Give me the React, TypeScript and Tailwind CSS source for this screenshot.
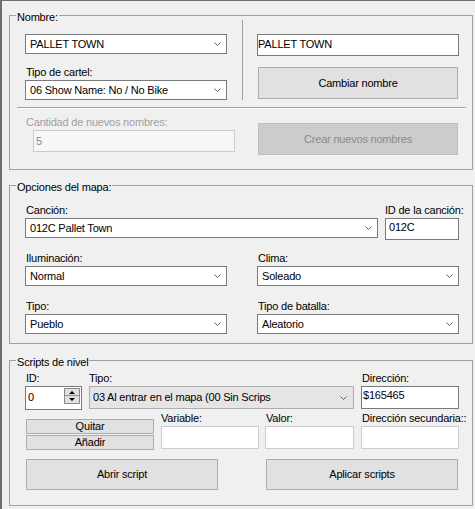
import type { ReactNode } from "react";

// WinForms-style map header editor panel.

function Chevron() {
  return (
    <svg width="7" height="4" viewBox="0 0 7 4" className="shrink-0">
      <path d="M0.5 0.5 L3.5 3.5 L6.5 0.5" stroke="#5f5f5f" strokeWidth="1" fill="none" />
    </svg>
  );
}

function Combo({ value, className = "" }: { value: string; className?: string }) {
  return (
    <div
      className={`flex items-center justify-between h-[20px] border border-[#7a7a7a] bg-white pl-[4px] pr-[5px] ${className}`}
    >
      <span className="whitespace-nowrap">{value}</span>
      <Chevron />
    </div>
  );
}

function FlatCombo({ value, className = "" }: { value: string; className?: string }) {
  return (
    <div
      className={`flex items-center justify-between h-[23px] border border-[#adadad] bg-[#e5e5e5] pl-[3px] pr-[6px] ${className}`}
    >
      <span className="whitespace-nowrap overflow-hidden">{value}</span>
      <Chevron />
    </div>
  );
}

function TextBox({
  value = "",
  className = "",
  light = false,
  disabled = false,
}: {
  value?: string;
  className?: string;
  light?: boolean;
  disabled?: boolean;
}) {
  return (
    <div
      className={`border whitespace-nowrap ${
        light ? "border-[#cccccc]" : "border-[#7a7a7a]"
      } ${disabled ? "bg-[#f7f7f7] text-[#8a8a8a]" : "bg-white"} ${className}`}
    >
      {value}
    </div>
  );
}

function Btn({
  children,
  className = "",
  disabled = false,
}: {
  children: ReactNode;
  className?: string;
  disabled?: boolean;
}) {
  return (
    <div
      className={`flex items-center justify-center border ${
        disabled
          ? "bg-[#cccccc] border-[#bfbfbf] text-[#8b8b8b]"
          : "bg-[#e1e1e1] border-[#adadad]"
      } ${className}`}
    >
      {children}
    </div>
  );
}

function Group({
  title,
  className,
  children,
}: {
  title: string;
  className: string;
  children: ReactNode;
}) {
  return (
    <div className={`relative ml-[7px] w-[464px] border border-[#a0a0a0] ${className}`}>
      <span className="absolute left-[6px] -top-[5px] px-[1px] bg-[#f0f0f0] whitespace-nowrap">
        {title}
      </span>
      {children}
    </div>
  );
}

function Spinner() {
  return (
    <div className="flex flex-col mt-[1px] mr-[1px] gap-0">
      <div className="w-[16px] h-[8px] bg-[#e1e1e1] border border-[#8a8a8a] flex items-center justify-center">
        <div className="w-0 h-0 border-l-[3px] border-r-[3px] border-b-[3px] border-l-transparent border-r-transparent border-b-black" />
      </div>
      <div className="w-[16px] h-[8px] bg-[#e1e1e1] border border-[#8a8a8a] border-t-0 flex items-center justify-center">
        <div className="w-0 h-0 border-l-[3px] border-r-[3px] border-t-[3px] border-l-transparent border-r-transparent border-t-black" />
      </div>
    </div>
  );
}

export default function App() {
  return (
    <div className="w-[475px] h-[509px] overflow-hidden bg-[#f0f0f0] border-t border-l-2 border-[#6e6e6e] text-black font-['Liberation_Sans',Arial,sans-serif] text-[11px] leading-[13px] tracking-[-0.2px]">
      <Group title="Nombre:" className="mt-[14px] h-[155px]">
        <div className="flex items-start">
          <div className="ml-[15px] mt-[18px] w-[202px] flex flex-col">
            <Combo value="PALLET TOWN" />
            <span className="mt-[12px] pl-[1px]">Tipo de cartel:</span>
            <Combo value="06 Show Name: No / No Bike" className="mt-[1px]" />
          </div>
          <div className="ml-[15px] mt-[4px] w-px h-[80px] bg-[#a0a0a0]" />
          <div className="ml-[14px] mt-[18px] w-[202px] flex flex-col">
            <TextBox value="PALLET TOWN" className="h-[22px] pt-[3px] pl-0" />
            <Btn className="ml-[1px] mt-[11px] w-[200px] h-[32px]">Cambiar nombre</Btn>
          </div>
        </div>
        <div className="ml-[7px] mt-[7px] w-[449px] h-[2px] border-t border-t-[#a0a0a0] border-b border-b-white" />
        <div className="flex items-start">
          <div className="ml-[16px] mt-[7px] w-[209px] flex flex-col">
            <span className="text-[#a0a0a0] whitespace-nowrap">Cantidad de nuevos nombres:</span>
            <TextBox value="5" light disabled className="ml-[7px] mt-[1px] w-[202px] h-[22px] pt-[4px] pl-[2px]" />
          </div>
          <Btn disabled className="ml-[23px] mt-[14px] w-[200px] h-[32px]">
            Crear nuevos nombres
          </Btn>
        </div>
      </Group>

      <Group title="Opciones del mapa:" className="mt-[15px] h-[159px]">
        <div className="ml-[15px] mt-[18px] flex flex-col">
          <div className="flex h-[34px]">
            <div className="w-[353px] flex flex-col">
              <span className="pl-[1px]">Canción:</span>
              <Combo value="012C Pallet Town" className="mt-[1px]" />
            </div>
            <div className="ml-[7px] w-[74px] flex flex-col">
              <span className="text-right pr-[1px] whitespace-nowrap">ID de la canción:</span>
              <TextBox value="012C" className="mt-[1px] h-[22px] pt-[2px] pl-[3px] shrink-0" />
            </div>
          </div>
          <div className="flex h-[34px] mt-[14px]">
            <div className="w-[202px] flex flex-col">
              <span className="pl-[1px]">Iluminación:</span>
              <Combo value="Normal" className="mt-[1px]" />
            </div>
            <div className="ml-[30px] w-[202px] flex flex-col">
              <span className="pl-[1px]">Clima:</span>
              <Combo value="Soleado" className="mt-[1px]" />
            </div>
          </div>
          <div className="flex h-[34px] mt-[14px]">
            <div className="w-[202px] flex flex-col">
              <span className="pl-[1px]">Tipo:</span>
              <Combo value="Pueblo" className="mt-[1px]" />
            </div>
            <div className="ml-[30px] w-[202px] flex flex-col">
              <span className="pl-[1px]">Tipo de batalla:</span>
              <Combo value="Aleatorio" className="mt-[1px]" />
            </div>
          </div>
        </div>
      </Group>

      <Group title="Scripts de nivel" className="mt-[16px] h-[146px]">
        <div className="ml-[15px] mt-[11px] flex items-start">
          <div className="w-[57px] flex flex-col">
            <span className="pl-[1px]">ID:</span>
            <div className="mt-[1px] h-[24px] border border-[#7a7a7a] bg-white flex items-start justify-between">
              <span className="pl-[2px] pt-[4px]">0</span>
              <Spinner />
            </div>
          </div>
          <div className="ml-[7px] w-[265px] flex flex-col">
            <span>Tipo:</span>
            <FlatCombo value="03 Al entrar en el mapa (00 Sin Scrips" className="mt-[1px]" />
          </div>
          <div className="ml-[7px] w-[98px] flex flex-col">
            <span className="pl-[1px]">Dirección:</span>
            <TextBox value="$165465" className="mt-[1px] h-[23px] pt-[2px] pl-[1px]" />
          </div>
        </div>
        <div className="ml-[16px] mt-[2px] flex items-start">
          <div className="w-[128px] pt-[7px] flex flex-col">
            <Btn className="h-[15px]">Quitar</Btn>
            <Btn className="mt-[1px] h-[15px]">Añadir</Btn>
          </div>
          <div className="ml-[7px] w-[98px] flex flex-col">
            <span>Variable:</span>
            <TextBox light className="mt-[1px] h-[23px]" />
          </div>
          <div className="ml-[6px] w-[89px] flex flex-col">
            <span className="pl-[1px]">Valor:</span>
            <TextBox light className="mt-[1px] h-[23px]" />
          </div>
          <div className="ml-[7px] w-[98px] flex flex-col">
            <span className="pl-[1px] whitespace-nowrap">Dirección secundaria::</span>
            <TextBox light className="mt-[1px] h-[23px]" />
          </div>
        </div>
        <div className="mt-[9px] flex">
          <Btn className="ml-[16px] w-[192px] h-[31px]">Abrir script</Btn>
          <Btn className="ml-[48px] w-[192px] h-[31px]">Aplicar scripts</Btn>
        </div>
      </Group>
    </div>
  );
}
